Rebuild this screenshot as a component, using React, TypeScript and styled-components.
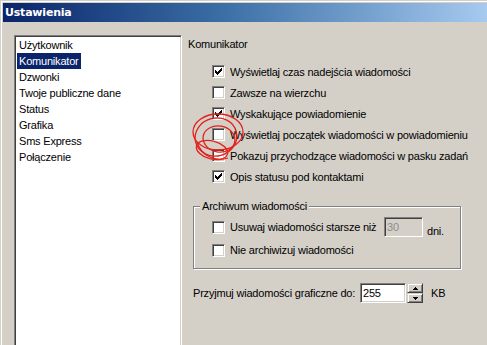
import React from "react";
import styled, { createGlobalStyle, css } from "styled-components";

const Global = createGlobalStyle`
  html, body {
    margin: 0;
    padding: 0;
    overflow: hidden;
    background: #d4d0c8;
  }
  body {
    font-family: "Liberation Sans", Arial, sans-serif;
    font-size: 11px;
    letter-spacing: -0.2px;
    color: #000;
  }
`;

const Window = styled.div`
  position: relative;
  width: 487px;
  height: 345px;
  box-sizing: border-box;
  padding: 3px 0 0 3px;
  background: #d4d0c8;
  box-shadow: inset 1px 1px 0 #d4d0c8, inset 2px 2px 0 #ffffff;
  display: flex;
  flex-direction: column;
  overflow: hidden;
`;

const TitleBar = styled.div`
  height: 19px;
  flex: none;
  display: flex;
  align-items: center;
  padding-left: 2px;
  background: linear-gradient(to right, #0a246a 0%, #3a6ea5 45%, #a6caf0 100%);
  color: #fff;
  font-family: "DejaVu Sans", Verdana, sans-serif;
  font-weight: bold;
  font-size: 11px;
  letter-spacing: -0.2px;
`;

const Body = styled.div`
  flex: 1;
  display: flex;
  gap: 6px;
  padding: 13px 0 0 11px;
  overflow: hidden;
`;

const sunken = css`
  border-style: solid;
  border-width: 1px;
  border-color: #808080 #ffffff #ffffff #808080;
  box-shadow: inset 1px 1px 0 #404040, inset -1px -1px 0 #d4d0c8;
`;

const ListBox = styled.ul`
  ${sunken};
  flex: none;
  width: 168px;
  height: 330px;
  box-sizing: border-box;
  margin: 0;
  padding: 1px 1px 0 2px;
  list-style: none;
  background: #fff;
`;

const ListItem = styled.li<{ $selected?: boolean }>`
  height: 16px;
  line-height: 16px;
  span {
    display: inline-block;
    padding: 0 2px;
    background: ${(p) => (p.$selected ? "#0a246a" : "transparent")};
    color: ${(p) => (p.$selected ? "#fff" : "#000")};
  }
`;

const Panel = styled.div`
  flex: 1;
  display: flex;
  flex-direction: column;
  padding-top: 3px;
`;

const SectionTitle = styled.div`
  line-height: 13px;
  height: 13px;
`;

const Options = styled.div`
  display: flex;
  flex-direction: column;
  margin-top: 10px;
  padding-left: 24px;
`;

const OptionRow = styled.label`
  height: 21px;
  display: flex;
  align-items: center;
  gap: 5px;
  white-space: nowrap;
`;

const Box = styled.span`
  ${sunken};
  flex: none;
  width: 13px;
  height: 13px;
  box-sizing: border-box;
  background: #fff;
  position: relative;
  svg {
    position: absolute;
    left: -1px;
    top: -1px;
  }
`;

const CheckBox: React.FC<{ checked?: boolean }> = ({ checked }) => (
  <Box>
    {checked && (
      <svg width="13" height="13" viewBox="0 0 13 13" shapeRendering="crispEdges">
        <path
          d="M3 5H4V6H5V7H6V6H7V5H8V4H9V3H10V6H9V7H8V8H7V9H6V10H5V9H4V8H3Z"
          fill="#000"
        />
      </svg>
    )}
  </Box>
);

const Group = styled.div`
  position: relative;
  margin: 19px 0 0 5px;
  width: 268px;
  padding: 10px 0 8px 18px;
  box-sizing: border-box;
  border: 1px solid #808080;
  box-shadow: inset 1px 1px 0 #fff, 1px 1px 0 #fff;
  display: flex;
  flex-direction: column;
  gap: 3px;
`;

const Legend = styled.span`
  position: absolute;
  top: -7px;
  left: 6px;
  padding: 0 2px;
  line-height: 13px;
  background: #d4d0c8;
`;

const GroupRow = styled.div`
  height: 20px;
  display: flex;
  align-items: center;
  white-space: nowrap;
`;

const CheckLabel = styled.label<{ $width?: number }>`
  display: flex;
  align-items: center;
  gap: 5px;
  width: ${(p) => (p.$width ? `${p.$width}px` : "auto")};
`;

const TextInput = styled.div<{ $disabled?: boolean; $width: number }>`
  ${sunken};
  width: ${(p) => p.$width}px;
  height: 20px;
  box-sizing: border-box;
  padding: 0 2px;
  line-height: 18px;
  background: ${(p) => (p.$disabled ? "#d4d0c8" : "#fff")};
  color: ${(p) => (p.$disabled ? "#8c8c8c" : "#000")};
`;

const Unit = styled.span<{ $drop?: number; $gap: number }>`
  margin-left: ${(p) => p.$gap}px;
  position: relative;
  top: ${(p) => p.$drop ?? 0}px;
`;

const SizeRow = styled.div`
  margin: 14px 0 0 5px;
  height: 20px;
  display: flex;
  align-items: center;
  white-space: nowrap;
`;

const SizeLabel = styled.span`
  width: 167px;
`;

const Spinner = styled.div`
  margin-left: 1px;
  width: 16px;
  height: 20px;
  display: flex;
  flex-direction: column;
`;

const SpinButton = styled.div`
  flex: 1;
  box-sizing: border-box;
  background: #d4d0c8;
  border-style: solid;
  border-width: 1px;
  border-color: #d4d0c8 #404040 #404040 #d4d0c8;
  box-shadow: inset 1px 1px 0 #fff, inset -1px -1px 0 #808080;
  display: flex;
  align-items: center;
  justify-content: center;
`;

const Arrow: React.FC<{ down?: boolean }> = ({ down }) => (
  <svg width="5" height="3" viewBox="0 0 5 3" shapeRendering="crispEdges">
    <path d={down ? "M0 0H5V1H4V2H3V3H2V2H1V1H0Z" : "M2 0H3V1H4V2H5V3H0V2H1V1H2Z"} fill="#000" />
  </svg>
);

const Scribble = styled.svg`
  position: absolute;
  left: 190px;
  top: 108px;
  pointer-events: none;
`;

const items = [
  "Użytkownik",
  "Komunikator",
  "Dzwonki",
  "Twoje publiczne dane",
  "Status",
  "Grafika",
  "Sms Express",
  "Połączenie",
];

const options: { text: string; checked: boolean }[] = [
  { text: "Wyświetlaj czas nadejścia wiadomości", checked: true },
  { text: "Zawsze na wierzchu", checked: false },
  { text: "Wyskakujące powiadomienie", checked: true },
  { text: "Wyświetlaj początek wiadomości w powiadomieniu", checked: false },
  { text: "Pokazuj przychodzące wiadomości w pasku zadań", checked: false },
  { text: "Opis statusu pod kontaktami", checked: true },
];

export default function App() {
  return (
    <>
      <Global />
      <Window>
        <TitleBar>Ustawienia</TitleBar>
        <Body>
          <ListBox>
            {items.map((it) => (
              <ListItem key={it} $selected={it === "Komunikator"}>
                <span>{it}</span>
              </ListItem>
            ))}
          </ListBox>
          <Panel>
            <SectionTitle>Komunikator</SectionTitle>
            <Options>
              {options.map((o) => (
                <OptionRow key={o.text}>
                  <CheckBox checked={o.checked} />
                  {o.text}
                </OptionRow>
              ))}
            </Options>
            <Group>
              <Legend>Archiwum wiadomości</Legend>
              <GroupRow>
                <CheckLabel $width={172}>
                  <CheckBox />
                  Usuwaj wiadomości starsze niż
                </CheckLabel>
                <TextInput $disabled $width={39}>30</TextInput>
                <Unit $gap={4} $drop={4}>dni.</Unit>
              </GroupRow>
              <GroupRow>
                <CheckLabel>
                  <CheckBox />
                  Nie archiwizuj wiadomości
                </CheckLabel>
              </GroupRow>
            </Group>
            <SizeRow>
              <SizeLabel>Przyjmuj wiadomości graficzne do:</SizeLabel>
              <TextInput $width={46}>255</TextInput>
              <Spinner>
                <SpinButton>
                  <Arrow />
                </SpinButton>
                <SpinButton>
                  <Arrow down />
                </SpinButton>
              </Spinner>
              <Unit $gap={8}>KB</Unit>
            </SizeRow>
          </Panel>
        </Body>
        <Scribble width="60" height="60" viewBox="0 0 60 60" fill="none" stroke="#e3211c" strokeWidth="1.3">
          <ellipse cx="28" cy="24" rx="25" ry="18" />
          <ellipse cx="26" cy="29" rx="21" ry="19" transform="rotate(-15 26 29)" />
          <ellipse cx="29" cy="31" rx="16" ry="13" transform="rotate(10 29 31)" />
          <ellipse cx="22" cy="42" rx="16" ry="9" transform="rotate(15 22 42)" />
          <path d="M7 34 C11 48 26 54 38 50" />
        </Scribble>
      </Window>
    </>
  );
}
